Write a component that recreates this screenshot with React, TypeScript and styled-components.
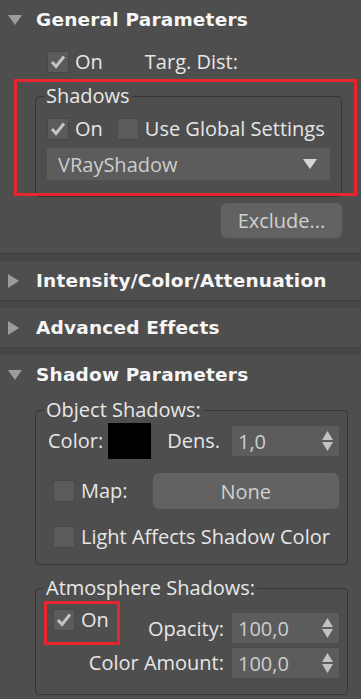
import React from 'react';
import styled, { createGlobalStyle } from 'styled-components';

const GlobalStyle = createGlobalStyle`
  html, body {
    margin: 0;
    padding: 0;
    background: #4e4e4e;
  }

  body {
    font-family: 'Open Sans', 'Noto Sans', sans-serif;
    color: #e4e4e4;
  }
`;

function Check({ checked, children }: { checked?: boolean; children?: React.ReactNode }) {
  return (
    <CheckWrapper>
      <CheckBox>
        {checked && (
          <svg width="22" height="22" viewBox="0 0 22 22">
            <path d="M5 11 L9 15.5 L17 5.5" fill="none" stroke="#c4c4c4" strokeWidth="3" strokeLinejoin="miter" />
          </svg>
        )}
      </CheckBox>
      {children && <CheckText>{children}</CheckText>}
    </CheckWrapper>
  );
}

function RolloutHeader({ open, title }: { open?: boolean; title: string }) {
  return (
    <Header>
      <Arrow>
        {open ? (
          <svg width="14" height="10" viewBox="0 0 14 10">
            <path d="M0 0 H14 L7 10 Z" fill="#9c9c9c" />
          </svg>
        ) : (
          <svg width="11" height="14" viewBox="0 0 11 14">
            <path d="M0 0 L11 7 L0 14 Z" fill="#9c9c9c" />
          </svg>
        )}
      </Arrow>
      <HeaderTitle>{title}</HeaderTitle>
    </Header>
  );
}

function Spinner({ value }: { value: string }) {
  return (
    <SpinnerField>
      <FieldValue>{value}</FieldValue>
      <SpinnerArrows>
        <svg width="11" height="20" viewBox="0 0 11 20">
          <path d="M5.5 0 L11 9 H0 Z" fill="#c2c2c2" />
          <path d="M0 11 H11 L5.5 20 Z" fill="#c2c2c2" />
        </svg>
      </SpinnerArrows>
    </SpinnerField>
  );
}

export default function App() {
  return (
    <>
      <GlobalStyle />
      <Panel>
        <Rollout>
          <RolloutHeader open title="General Parameters" />
          <GeneralBody>
            <TopRow>
              <Check checked>On</Check>
              <TargLabel>Targ. Dist:</TargLabel>
            </TopRow>
            <Annotated>
              <ShadowsGroup>
                <Legend>Shadows</Legend>
                <CheckRow>
                  <Check checked>On</Check>
                  <Check>Use Global Settings</Check>
                </CheckRow>
                <Dropdown>
                  <FieldValue>VRayShadow</FieldValue>
                  <svg width="14" height="10" viewBox="0 0 14 10">
                    <path d="M0 0 H14 L7 10 Z" fill="#d6d6d6" />
                  </svg>
                </Dropdown>
              </ShadowsGroup>
              <RedFrame />
            </Annotated>
            <ButtonRow>
              <ExcludeButton>Exclude...</ExcludeButton>
            </ButtonRow>
          </GeneralBody>
        </Rollout>
        <Divider />
        <Rollout>
          <RolloutHeader title="Intensity/Color/Attenuation" />
        </Rollout>
        <Divider />
        <Rollout>
          <RolloutHeader title="Advanced Effects" />
        </Rollout>
        <Divider />
        <Rollout>
          <RolloutHeader open title="Shadow Parameters" />
          <ShadowBody>
            <ObjectGroup>
              <Legend $shift={-4}>Object Shadows:</Legend>
              <ColorRow>
                <Label>Color:</Label>
                <Swatch />
                <Label>Dens.</Label>
                <Spinner value="1,0" />
              </ColorRow>
              <MapRow>
                <Check>Map:</Check>
                <NoneButton>None</NoneButton>
              </MapRow>
              <LightRow>
                <Check>Light Affects Shadow Color</Check>
              </LightRow>
            </ObjectGroup>
            <AtmosGroup>
              <Legend $shift={0}>Atmosphere Shadows:</Legend>
              <AtmosGrid>
                <OnFrame>
                  <Check checked>On</Check>
                </OnFrame>
                <GridLabel>Opacity:</GridLabel>
                <TopSpinner>
                  <Spinner value="100,0" />
                </TopSpinner>
                <GridLabel $wide>Color Amount:</GridLabel>
                <Spinner value="100,0" />
              </AtmosGrid>
            </AtmosGroup>
          </ShadowBody>
        </Rollout>
      </Panel>
    </>
  );
}

const Panel = styled.div`
  width: 361px;
  height: 699px;
  overflow: hidden;
  display: flex;
  flex-direction: column;
`;

const Rollout = styled.section`
  display: flex;
  flex-direction: column;
`;

const Header = styled.div`
  height: 39px;
  display: flex;
  align-items: center;
  padding-left: 8px;
`;

const Arrow = styled.span`
  width: 28px;
  display: flex;
  align-items: center;
`;

const HeaderTitle = styled.span`
  font-family: 'DejaVu Sans', sans-serif;
  font-weight: 700;
  font-size: 18.5px;
  color: #f6f6f6;
  letter-spacing: 0.2px;
`;

const Divider = styled.div`
  height: 7px;
  background: #464646;
  border-top: 1px solid #3e3e3e;
`;

const GeneralBody = styled.div`
  display: flex;
  flex-direction: column;
  padding: 12px 19px 15px 35px;
`;

const TopRow = styled.div`
  display: flex;
  align-items: center;
  height: 22px;
  padding-left: 12px;
`;

const Label = styled.span`
  font-size: 20px;
  line-height: 22px;
  color: #e6e6e6;
  white-space: nowrap;
`;

const TargLabel = styled(Label)`
  margin-left: 42px;
`;

const CheckWrapper = styled.label`
  display: flex;
  align-items: center;
  gap: 6px;
`;

const CheckBox = styled.span`
  width: 22px;
  height: 22px;
  box-sizing: border-box;
  background: #5b5b5b;
  border: 1px solid #484848;
  display: flex;
  align-items: center;
  justify-content: center;

  svg {
    flex: none;
  }
`;

const CheckText = styled.span`
  font-size: 20px;
  line-height: 22px;
  color: #e6e6e6;
  white-space: nowrap;
`;

const Annotated = styled.div`
  position: relative;
  margin-top: 13px;
`;

const RedFrame = styled.div`
  position: absolute;
  left: -21px;
  right: -15px;
  top: -7px;
  bottom: 1px;
  border: 3px solid #e8242c;
  pointer-events: none;
`;

const Group = styled.fieldset`
  margin: 0;
  border: 1px solid #363636;
  border-radius: 4px;
  display: flex;
  flex-direction: column;
  min-width: 0;
`;

const Legend = styled.legend<{ $shift?: number }>`
  font-size: 20px;
  line-height: 20px;
  padding: 0 2px;
  margin-left: ${(p) => p.$shift ?? -3}px;
  color: #e8e8e8;
`;

const ShadowsGroup = styled(Group)`
  padding: 0 11px 16px 11px;
`;

const CheckRow = styled.div`
  display: flex;
  align-items: center;
  gap: 14px;
  height: 23px;
  margin-top: 11px;
`;

const Dropdown = styled.div`
  height: 32px;
  margin-top: 8px;
  background: #5c5c5c;
  display: flex;
  align-items: center;
  justify-content: space-between;
  padding: 0 13px 0 11px;
`;

const FieldValue = styled.span`
  font-size: 20px;
  color: #cdcdcd;
  white-space: nowrap;
`;

const ButtonRow = styled.div`
  display: flex;
  justify-content: flex-end;
  margin-top: 6px;
`;

const RoundButton = styled.button`
  all: unset;
  box-sizing: border-box;
  height: 36px;
  background: #626262;
  border-radius: 6px;
  font-family: 'Open Sans', sans-serif;
  font-size: 20px;
  color: #d0d0d0;
  display: flex;
  align-items: center;
  justify-content: center;
`;

const ExcludeButton = styled(RoundButton)`
  width: 121px;
  height: 35px;
`;

const ShadowBody = styled.div`
  display: flex;
  flex-direction: column;
  padding: 6px 13px 0 35px;
`;

const ObjectGroup = styled(Group)`
  padding: 0 8px 12px 12px;
`;

const ColorRow = styled.div`
  display: flex;
  align-items: center;
  height: 36px;
  margin-top: 3px;
`;

const Swatch = styled.span`
  width: 43px;
  height: 36px;
  background: #000;
  margin: 0 16px 0 5px;
`;

const SpinnerField = styled.div`
  width: 107px;
  height: 30px;
  margin-left: auto;
  box-sizing: border-box;
  background: #5c5c5c;
  display: flex;
  align-items: center;
  justify-content: space-between;
  padding: 0 6px 0 6px;
`;

const SpinnerArrows = styled.span`
  display: flex;
`;

const MapRow = styled.div`
  display: flex;
  align-items: center;
  height: 36px;
  margin-top: 14px;
  padding-left: 5px;
`;

const NoneButton = styled(RoundButton)`
  flex: 1;
  margin-left: 25px;
`;

const LightRow = styled.div`
  display: flex;
  align-items: center;
  height: 30px;
  margin-top: 13px;
  padding-left: 5px;
`;

const AtmosGroup = styled(Group)`
  margin-top: 13px;
  padding: 0 8px 16px 8px;
`;

const AtmosGrid = styled.div`
  display: grid;
  grid-template-columns: 1fr auto 107px;
  column-gap: 8px;
  row-gap: 3px;
  margin-top: 3px;
`;

const OnFrame = styled.div`
  justify-self: start;
  height: 44px;
  box-sizing: border-box;
  border: 3px solid #e8242c;
  padding: 0 8px 6px 6px;
  display: flex;
  align-items: center;
`;

const GridLabel = styled.span<{ $wide?: boolean }>`
  grid-column: ${(p) => (p.$wide ? '1 / 3' : 'auto')};
  justify-self: end;
  align-self: ${(p) => (p.$wide ? 'center' : 'end')};
  margin-bottom: ${(p) => (p.$wide ? 0 : 5)}px;
  font-size: 20px;
  line-height: 22px;
  color: #e6e6e6;
  white-space: nowrap;
`;

const TopSpinner = styled.div`
  align-self: end;
  margin-bottom: 2px;
  display: flex;
`;
